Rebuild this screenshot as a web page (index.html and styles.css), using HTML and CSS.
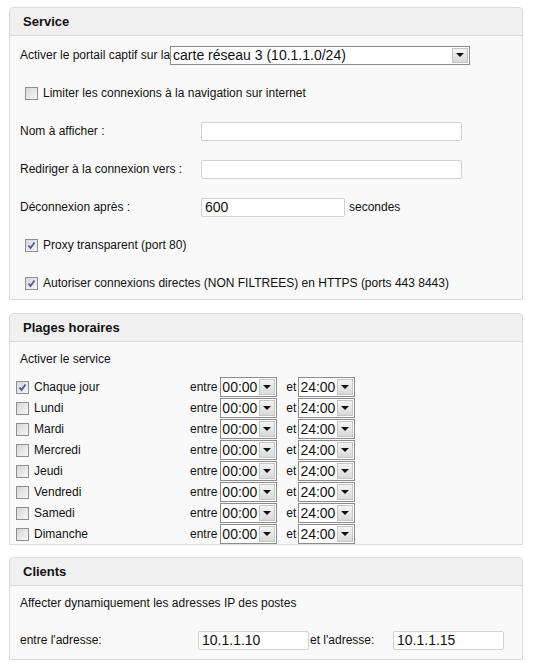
FILE: index.html
```html
<!DOCTYPE html>
<html>
<head>
	<title>Portail captif</title>
	<link rel="stylesheet" href="styles.css">
</head>
<body>
	<div class="panel">
		<div class="panel-head">Service</div>
		<div class="panel-body service">
			<div class="row">
				<span>Activer le portail captif sur la</span>
				<span class="sel sel-wide">
					<select><option>carte réseau 3 (10.1.1.0/24)</option></select>
					<span class="sel-btn"></span>
				</span>
			</div>
			<label class="row check-row">
				<span class="cb"></span>
				Limiter les connexions à la navigation sur internet
			</label>
			<div class="row">
				<span class="lbl">Nom à afficher :</span>
				<input type="text" class="txt txt-long">
			</div>
			<div class="row">
				<span class="lbl">Rediriger à la connexion vers :</span>
				<input type="text" class="txt txt-long">
			</div>
			<div class="row">
				<span class="lbl">Déconnexion après :</span>
				<input type="text" class="txt txt-mid" value="600">
				<span class="unit">secondes</span>
			</div>
			<label class="row check-row">
				<span class="cb checked"><svg width="11" height="11" viewBox="0 0 11 11"><path d="M2.5 5.5 L4.5 8 L8.5 2.5" fill="none" stroke="#4a5aa8" stroke-width="1.8"/></svg></span>
				Proxy transparent (port 80)
			</label>
			<label class="row check-row">
				<span class="cb checked"><svg width="11" height="11" viewBox="0 0 11 11"><path d="M2.5 5.5 L4.5 8 L8.5 2.5" fill="none" stroke="#4a5aa8" stroke-width="1.8"/></svg></span>
				Autoriser connexions directes (NON FILTREES) en HTTPS (ports 443 8443)
			</label>
		</div>
	</div>

	<div class="panel panel-hours">
		<div class="panel-head">Plages horaires</div>
		<div class="panel-body hours">
			<div class="row">Activer le service</div>
			<div class="days" id="days"></div>
		</div>
	</div>

	<div class="panel">
		<div class="panel-head">Clients</div>
		<div class="panel-body clients">
			<div class="row">Affecter dynamiquement les adresses IP des postes</div>
			<div class="row">
				<span class="lbl lbl-client">entre l'adresse:</span>
				<input type="text" class="txt txt-ip" value="10.1.1.10">
				<span class="lbl-et">et l'adresse:</span>
				<input type="text" class="txt txt-ip" value="10.1.1.15">
			</div>
		</div>
	</div>

	<script>
		const days = ["Chaque jour", "Lundi", "Mardi", "Mercredi", "Jeudi", "Vendredi", "Samedi", "Dimanche"];
		const check = '<svg width="11" height="11" viewBox="0 0 11 11"><path d="M2.5 5.5 L4.5 8 L8.5 2.5" fill="none" stroke="#4a5aa8" stroke-width="1.8"/></svg>';

		function timeSelect(value) {
			return '<span class="sel sel-time"><select><option>' + value + '</option></select><span class="sel-btn"></span></span>';
		}

		document.getElementById("days").innerHTML = days.map((d, i) =>
			'<div class="day">' +
				'<label class="day-name"><span class="cb' + (i === 0 ? ' checked">' + check : '">') + '</span>' + d + '</label>' +
				'<span class="entre">entre</span>' + timeSelect("00:00") +
				'<span class="et">et</span>' + timeSelect("24:00") +
			'</div>'
		).join("");
	</script>
</body>
</html>
```

FILE: styles.css
```css
body {
	margin: 0;
	padding: 7px 10px 0 9px;
	background: #fff;
	font-family: "Liberation Sans", Arial, sans-serif;
	font-size: 12px;
	color: #111;
}

.panel {
	border: 1px solid #dadada;
	border-radius: 4px 4px 0 0;
	background: #f9f9f9;
	margin-bottom: 13px;
}

.panel-hours {
	margin-bottom: 12px;
}

.panel-head {
	height: 27px;
	line-height: 27px;
	padding-left: 13px;
	background: #f0f0f0;
	border-bottom: 1px solid #dadada;
	border-radius: 4px 4px 0 0;
	font-size: 13px;
	font-weight: bold;
	color: #111;
}

.panel-body {
	display: flex;
	flex-direction: column;
	padding: 0 10px;
}

.row {
	display: flex;
	align-items: center;
	height: 20px;
	white-space: nowrap;
}

/* service */
.service {
	gap: 18px;
	padding-top: 9px;
	padding-bottom: 6px;
}

.check-row {
	padding-left: 5px;
}

.check-row .cb {
	margin-right: 5px;
}

.lbl {
	width: 181px;
	flex: none;
}

.unit {
	margin-left: 4px;
}

.txt {
	box-sizing: border-box;
	height: 19px;
	border: 1px solid #d2d2d2;
	border-radius: 2px;
	background: #fff;
	padding: 0 3px;
	font-family: "Liberation Sans", Arial, sans-serif;
	font-size: 14px;
	color: #111;
	outline: none;
}

.txt-long {
	width: 261px;
}

.txt-mid {
	width: 144px;
}

/* checkbox */
.cb {
	box-sizing: border-box;
	width: 13px;
	height: 13px;
	flex: none;
	border: 1px solid #8f8f8f;
	background: linear-gradient(135deg, #d6d6d6, #f7f7f7);
	display: inline-flex;
	align-items: center;
	justify-content: center;
}

/* select */
.sel {
	box-sizing: border-box;
	display: inline-flex;
	height: 19px;
	border: 1px solid #8c8c8c;
	background: #fff;
	padding: 1px;
}

.sel select {
	appearance: none;
	-webkit-appearance: none;
	flex: 1;
	min-width: 0;
	border: 0;
	background: transparent;
	padding: 0 1px;
	font-family: "Liberation Sans", Arial, sans-serif;
	font-size: 14px;
	line-height: 15px;
	color: #111;
	outline: none;
}

.sel-btn {
	box-sizing: border-box;
	width: 16px;
	flex: none;
	border: 1px solid #c4c4c4;
	background: linear-gradient(#f4f4f4, #d9d9d9);
	display: flex;
	align-items: center;
	justify-content: center;
}

.sel-btn::before {
	content: "";
	border-left: 4px solid transparent;
	border-right: 4px solid transparent;
	border-top: 4px solid #111;
}

.sel-wide {
	width: 300px;
}

/* hours */
.hours {
	padding-top: 7px;
	padding-bottom: 0;
}

.days {
	display: flex;
	flex-direction: column;
	gap: 1px;
	margin-top: 8px;
	margin-left: -4px;
}

.day {
	display: flex;
	align-items: center;
	height: 20px;
}

.day .sel {
	height: 20px;
}

.day-name {
	width: 174px;
	display: flex;
	align-items: center;
}

.day-name .cb {
	margin-right: 5px;
}

.entre {
	margin-right: 3px;
}

.et {
	margin: 0 2px 0 9px;
}

.sel-time {
	width: 57px;
}

.sel-time select {
	padding: 0;
	font-size: 14px;
}

/* clients */
.clients {
	padding-top: 7px;
	padding-bottom: 9px;
	gap: 17px;
}

.lbl-client {
	width: 178px;
}

.txt-ip {
	width: 111px;
}

.lbl-et {
	width: 83px;
	padding-left: 1px;
}
```
